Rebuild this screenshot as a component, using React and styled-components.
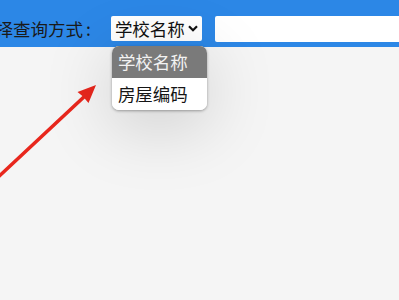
import React from "react";
import styled, { createGlobalStyle } from "styled-components";

const GlobalStyle = createGlobalStyle`
  html, body { margin: 0; padding: 0; }
  body {
    background: #f4f4f4;
    font-family: "Noto Sans CJK SC", "Noto Sans", sans-serif;
    overflow: hidden;
  }
`;

const Page = styled.div`
  position: relative;
  width: 399px;
  height: 300px;
  background: #f5f5f5;
  overflow: hidden;
`;

const Toolbar = styled.div`
  display: flex;
  align-items: center;
  height: 47px;
  box-sizing: border-box;
  padding-top: 10px;
  background: #2c87e6;
`;

const Label = styled.span`
  margin-left: -22px;
  font-size: 17.5px;
  color: #1a1a1a;
  white-space: nowrap;
  line-height: 1;
`;

const Colon = styled.span`
  margin-left: 3px;
`;

const SelectWrap = styled.div`
  position: relative;
  margin-left: 20px;
`;

const SelectBox = styled.div`
  display: flex;
  align-items: center;
  width: 91px;
  height: 25px;
  box-sizing: border-box;
  padding-left: 4px;
  background: #fff;
  border-radius: 2px;
  font-size: 17.5px;
  color: #111;
  line-height: 1;
`;

const Chevron = styled.svg`
  margin-left: 3px;
  width: 10px;
  height: 7px;
`;

const SearchInput = styled.div`
  flex: 1;
  height: 26px;
  margin-left: 13px;
  margin-right: -6px;
  background: #fff;
  border-radius: 2px;
`;

const Menu = styled.div`
  position: absolute;
  top: 30px;
  left: 1px;
  width: 95px;
  border-radius: 7px;
  overflow: hidden;
  background: #fff;
  box-shadow: 0 1px 3px rgba(0, 0, 0, 0.35), 0 14px 70px rgba(0, 0, 0, 0.18);
  z-index: 2;
`;

const MenuItem = styled.div`
  height: 32px;
  display: flex;
  align-items: center;
  padding-left: 6px;
  font-size: 17.5px;
  line-height: 1;
  color: ${(p) => (p.$active ? "#f2f2f2" : "#151515")};
  background: ${(p) => (p.$active ? "#7a7a7a" : "#fff")};
`;

const Arrow = styled.svg`
  position: absolute;
  left: 0;
  top: 0;
  width: 399px;
  height: 300px;
  pointer-events: none;
`;

export default function App() {
  return (
    <Page>
      <GlobalStyle />
      <Toolbar>
        <Label>
          选择查询方式<Colon>:</Colon>
        </Label>
        <SelectWrap>
          <SelectBox>
            学校名称
            <Chevron viewBox="0 0 10 7">
              <path d="M1 1.3 L5 5.3 L9 1.3" fill="none" stroke="#111" strokeWidth="2.2" />
            </Chevron>
          </SelectBox>
          <Menu>
            <MenuItem $active>学校名称</MenuItem>
            <MenuItem>房屋编码</MenuItem>
          </Menu>
        </SelectWrap>
        <SearchInput />
      </Toolbar>
      <Arrow viewBox="0 0 399 300">
        <line x1="-6" y1="181" x2="86" y2="95" stroke="#e8271d" strokeWidth="3.6" strokeLinecap="round" />
        <path d="M96 85 L77.5 92 L83 96.5 L88.5 103 Z" fill="#e8271d" />
      </Arrow>
    </Page>
  );
}
